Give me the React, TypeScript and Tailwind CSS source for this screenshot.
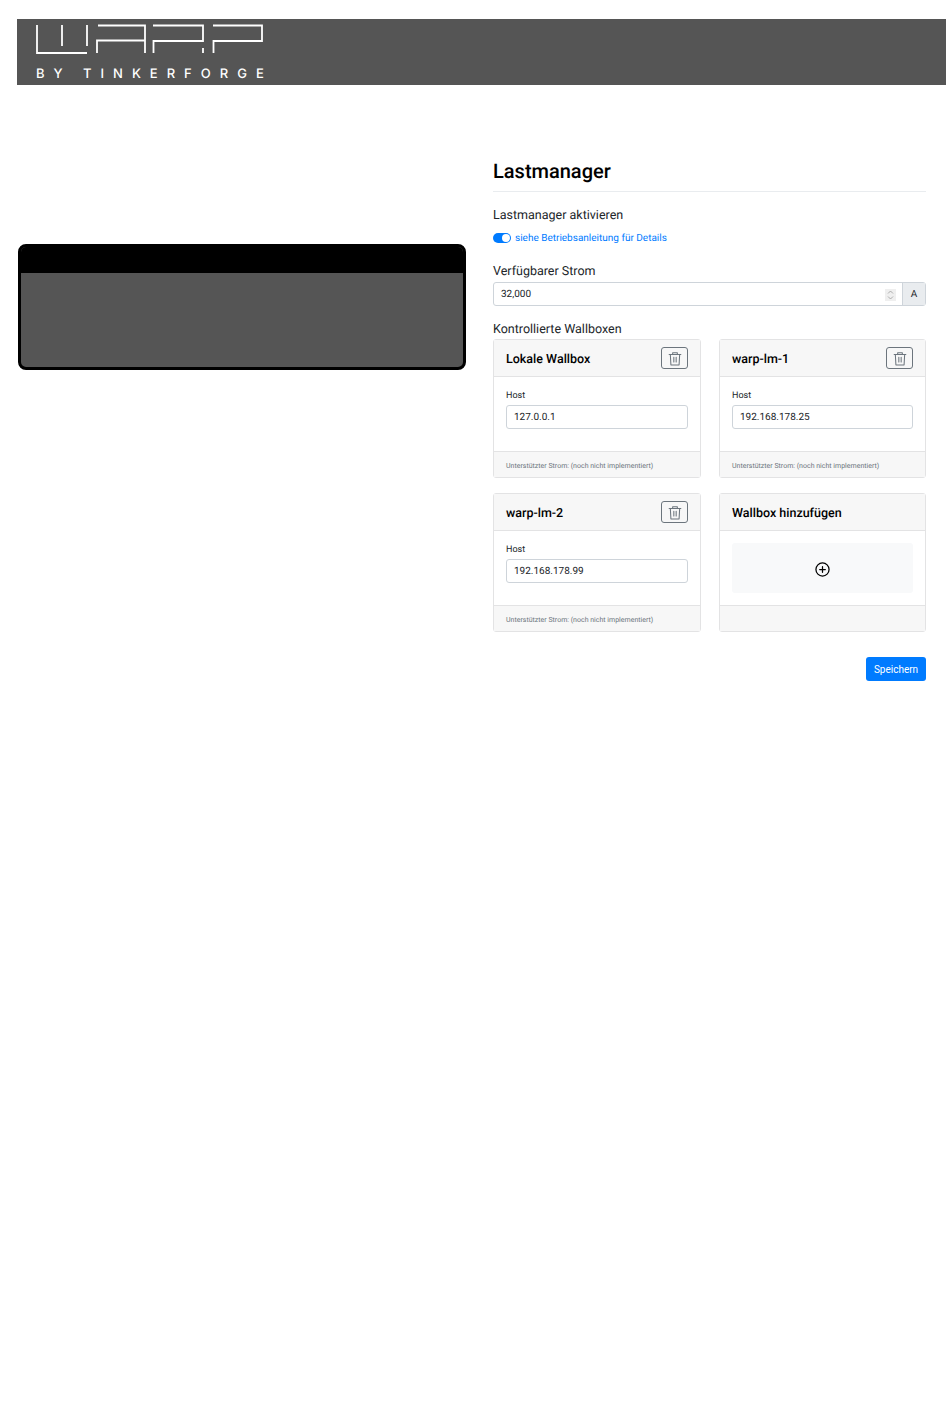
import React from 'react';

const font = { fontFamily: 'Roboto, sans-serif' };

const Logo = () => (
  <svg width="240" height="36" viewBox="0 0 240 36" fill="none" stroke="#ffffff" strokeWidth="1.8">
    {/* W */}
    <path d="M1 1V29H51" />
    <path d="M26 1V22" />
    <path d="M51 1V22" />
    {/* A */}
    <path d="M62 1.5H109V29" />
    <path d="M61 29V16.5H109" />
    {/* R */}
    <path d="M117 1.5H167V17H117.5V29" />
    <path d="M167 24V29" />
    {/* P */}
    <path d="M177.5 29V17H226V1.5H177" />
  </svg>
);

const TrashIcon = () => (
  <svg width="14" height="15" viewBox="0 0 24 24" fill="none" stroke="#6c757d" strokeWidth="1.8" strokeLinecap="round" strokeLinejoin="round">
    <path d="M2 5h20" />
    <path d="M8 5V2h8v3" />
    <path d="M4 5l1 18h14l1-18" />
    <path d="M10 10v8M14 10v8" />
  </svg>
);

const PlusCircle = () => (
  <svg width="15" height="15" viewBox="0 0 24 24" fill="none" stroke="#000000" strokeWidth="2" strokeLinecap="round">
    <circle cx="12" cy="12" r="10.5" />
    <path d="M12 7.5v9M7.5 12h9" />
  </svg>
);

const WallboxCard = ({ name, host }: { name: string; host: string }) => (
  <div className="border border-[#e3e3e4] rounded-[3px] bg-white">
    <div className="h-[37px] px-3 flex items-center justify-between bg-[#f7f7f7] border-b border-[#e3e3e4]">
      <span className="pt-1 text-[12.5px] font-medium text-black">{name}</span>
      <button className="w-[27px] h-[22px] border border-[#6c757d] rounded-[3px] flex items-center justify-center">
        <TrashIcon />
      </button>
    </div>
    <div className="h-[74px] px-3 pt-[14px]">
      <div className="text-[9px] leading-[11px] text-[#212529] mb-[3px]">Host</div>
      <div className="h-[24px] pl-[7px] pr-2 pt-px flex items-center border border-[#ced4da] rounded-[3px] text-[10px] text-[#212529]">{host}</div>
    </div>
    <div className="h-[26px] px-3 pt-1 flex items-center bg-[#f7f7f7] border-t border-[#e3e3e4] text-[7px] text-[#6c757d]">
      Unterstützter Strom: (noch nicht implementiert)
    </div>
  </div>
);

export default function App() {
  return (
    <div className="w-[950px] h-[1419px] bg-white pt-[19px] pl-[17px] pr-1 [text-rendering:geometricPrecision]" style={font}>
      {/* Header */}
      <header className="h-[66px] bg-[#555555] pl-[19px] pt-[5px]">
        <Logo />
        <div className="mt-[6px] text-[13px] leading-[16px] font-medium text-white tracking-[9px] whitespace-nowrap font-['Inter',sans-serif]">
          BY <span className="ml-[-1px]">TINKERFORGE</span>
        </div>
      </header>

      <div className="flex pr-5">
        {/* Left column */}
        <div className="w-[450px] pt-[159px]">
          <div className="ml-px w-[448px] h-[126px] border-[3px] border-black rounded-[8px] overflow-hidden bg-[#555555]">
            <div className="h-[26px] bg-black" />
          </div>
        </div>

        {/* Right column */}
        <main className="w-[433px] ml-[26px] pt-[73px]">
          <div className="pb-[7px] border-b border-[#e9ecef]">
            <h1 className="text-[20px] leading-[26px] font-medium text-black">Lastmanager</h1>
          </div>

          <div className="mt-4 text-[12.5px] leading-[16px] text-[#212529]">Lastmanager aktivieren</div>
          <div className="mt-[7px] flex items-center h-[14px]">
            <div className="w-[18px] h-[10px] rounded-full bg-[#007bff] flex items-center justify-end pr-[1px]">
              <div className="w-[8px] h-[8px] rounded-full bg-white" />
            </div>
            <span className="ml-1 text-[10px] text-[#007bff]">siehe Betriebsanleitung für Details</span>
          </div>

          <div className="mt-[19px] text-[12.5px] leading-[16px] text-[#212529]">Verfügbarer Strom</div>
          <div className="mt-[2px] h-[24px] flex border border-[#ced4da] rounded-[3px] text-[10px] text-[#212529]">
            <div className="flex-1 pl-[7px] pr-[6px] pt-px flex items-center justify-between">
              <span>32,000</span>
              <div className="w-[11px] h-[12px] bg-[#efefef] flex items-center justify-center">
                <svg width="7" height="10" viewBox="0 0 7 10" fill="none" stroke="#9a9a9a" strokeWidth="0.8">
                  <path d="M1 3.5L3.5 1L6 3.5M1 6.5L3.5 9L6 6.5" />
                </svg>
              </div>
            </div>
            <div className="w-[23px] bg-[#e9ecef] border-l border-[#ced4da] flex items-center justify-center">A</div>
          </div>

          <div className="mt-4 text-[12.5px] leading-[16px] text-[#212529]">Kontrollierte Wallboxen</div>

          <div className="mt-px grid grid-cols-[208px_207px] gap-x-[18px] gap-y-[15px]">
            <WallboxCard name="Lokale Wallbox" host="127.0.0.1" />
            <WallboxCard name="warp-lm-1" host="192.168.178.25" />
            <WallboxCard name="warp-lm-2" host="192.168.178.99" />
            <div className="border border-[#e3e3e4] rounded-[3px] bg-white">
              <div className="h-[37px] px-3 flex items-center bg-[#f7f7f7] border-b border-[#e3e3e4]">
                <span className="pt-1 text-[12.5px] font-medium text-black">Wallbox hinzufügen</span>
              </div>
              <div className="h-[74px] px-3 pt-3">
                <div className="h-[50px] pt-[2px] bg-[#f8f9fa] rounded-[3px] flex items-center justify-center">
                  <PlusCircle />
                </div>
              </div>
              <div className="h-[26px] bg-[#f7f7f7] border-t border-[#e3e3e4]" />
            </div>
          </div>

          <div className="mt-[25px] flex justify-end">
            <button className="w-[60px] h-[24px] rounded-[3px] bg-[#007bff] text-white text-[10px]">Speichern</button>
          </div>
        </main>
      </div>
    </div>
  );
}
